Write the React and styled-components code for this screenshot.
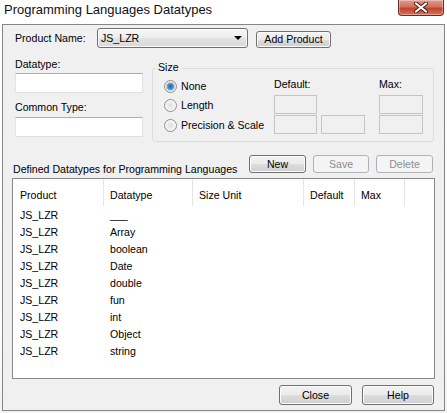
import styled, { createGlobalStyle } from "styled-components";

const GlobalStyle = createGlobalStyle`
  html, body {
    margin: 0;
    padding: 0;
    width: 447px;
    height: 413px;
    overflow: hidden;
  }
  body {
    font-family: "Liberation Sans", Arial, sans-serif;
    font-size: 10.6px;
    color: #000;
  }
`;

const rows = [
  ["JS_LZR", "___"],
  ["JS_LZR", "Array"],
  ["JS_LZR", "boolean"],
  ["JS_LZR", "Date"],
  ["JS_LZR", "double"],
  ["JS_LZR", "fun"],
  ["JS_LZR", "int"],
  ["JS_LZR", "Object"],
  ["JS_LZR", "string"],
];

const columns = ["Product", "Datatype", "Size Unit", "Default", "Max", ""];

export default function App() {
  return (
    <Window>
      <GlobalStyle />
      <TitleBar>
        <Title>Programming Languages Datatypes</Title>
        <CloseX>
          <svg width="14" height="11" viewBox="0 0 14 11">
            <path
              d="M2 1.5 L12 9.5 M12 1.5 L2 9.5"
              stroke="#4a1a14"
              strokeWidth="4"
              strokeLinecap="round"
            />
            <path
              d="M2 1.5 L12 9.5 M12 1.5 L2 9.5"
              stroke="#fff"
              strokeWidth="2.2"
              strokeLinecap="round"
            />
          </svg>
        </CloseX>
      </TitleBar>

      <Client>
        <ProductRow>
          <ProductLabel>Product Name:</ProductLabel>
          <Combo>
            <span>JS_LZR</span>
            <Arrow />
          </Combo>
          <Button $w={75} $h={17} $ml={8}>Add Product</Button>
        </ProductRow>

        <FieldsRow>
          <LeftCol>
            <FieldLabel>Datatype:</FieldLabel>
            <TextBox $mt={2} />
            <FieldLabel $mt={8}>Common Type:</FieldLabel>
            <TextBox $mt={3} />
          </LeftCol>

          <Group>
            <Legend>Size</Legend>
            <SizeGrid>
              <Radio style={{ gridArea: "none" }} $checked>None</Radio>
              <Radio style={{ gridArea: "len" }}>Length</Radio>
              <Radio style={{ gridArea: "prec" }}>Precision &amp; Scale</Radio>
              <SmallLabel style={{ gridArea: "dlab" }}>Default:</SmallLabel>
              <SmallLabel style={{ gridArea: "mlab" }}>Max:</SmallLabel>
              <DisabledBox style={{ gridArea: "d1" }} />
              <DisabledBox style={{ gridArea: "m1" }} />
              <DisabledBox style={{ gridArea: "d2" }} />
              <DisabledBox style={{ gridArea: "d3" }} />
              <DisabledBox style={{ gridArea: "m2" }} />
            </SizeGrid>
          </Group>
        </FieldsRow>

        <DefinedRow>
          <DefinedLabel>Defined Datatypes for Programming Languages</DefinedLabel>
          <ButtonGroup>
            <Button $w={57} $h={18}>New</Button>
            <Button $w={56} $h={18} disabled>Save</Button>
            <Button $w={57} $h={18} disabled>Delete</Button>
          </ButtonGroup>
        </DefinedRow>

        <List>
          <Header>
            {columns.map((c, i) => (
              <HeadCell key={i}>{c}</HeadCell>
            ))}
          </Header>
          <Body>
            {rows.map(([p, d], i) => (
              <Row key={i}>
                <Cell>{p}</Cell>
                <Cell>{d}</Cell>
              </Row>
            ))}
          </Body>
        </List>

        <Footer>
          <Button $w={73} $h={20}>Close</Button>
          <Button $w={72} $h={20}>Help</Button>
        </Footer>
      </Client>
    </Window>
  );
}

const Window = styled.div`
  width: 447px;
  height: 413px;
  display: flex;
  flex-direction: column;
  background: linear-gradient(#ffffff, #fbfbfb 85%, #f2f2f2);
`;

const TitleBar = styled.div`
  height: 24px;
  display: flex;
  justify-content: space-between;
  align-items: flex-start;
`;

const Title = styled.div`
  font-family: "Liberation Sans", Arial, sans-serif;
  font-size: 13px;
  line-height: 20px;
  padding: 0 0 0 4px;
  color: #111;
`;

const CloseX = styled.div`
  width: 46px;
  height: 16px;
  margin-right: 3px;
  box-sizing: border-box;
  border: 1px solid #6e2a22;
  border-top: none;
  border-radius: 0 0 4px 4px;
  background: linear-gradient(#e29a8c 0%, #d46f5e 45%, #c0432e 55%, #d2725f 100%);
  box-shadow: inset 0 0 0 1px rgba(255, 255, 255, 0.35);
  display: flex;
  align-items: center;
  justify-content: center;
`;

const Client = styled.div`
  margin-left: 2px;
  width: 443px;
  height: 387px;
  box-sizing: border-box;
  border: 1px solid #858585;
  background: #f0f0f0;
  padding: 3px 9px 0 9px;
  display: flex;
  flex-direction: column;
`;

const ProductRow = styled.div`
  display: flex;
  align-items: center;
  height: 20px;
  padding-left: 3px;
`;

const ProductLabel = styled.div`
  width: 82px;
  line-height: 12px;
`;

const Combo = styled.div`
  width: 151px;
  height: 20px;
  box-sizing: border-box;
  border: 1px solid #707070;
  border-radius: 3px;
  background: linear-gradient(#f7f7f7 0%, #ededed 50%, #e2e2e2 51%, #d9d9d9 100%);
  box-shadow: inset 0 0 0 1px #fbfbfb;
  display: flex;
  align-items: center;
  justify-content: space-between;
  padding: 0 4px 0 3px;
  line-height: 13px;
`;

const Arrow = styled.span`
  width: 0;
  height: 0;
  border-left: 4px solid transparent;
  border-right: 4px solid transparent;
  border-top: 4px solid #000;
  margin-right: 1px;
`;

const Button = styled.button`
  width: ${(p) => p.$w}px;
  height: ${(p) => p.$h}px;
  margin-left: ${(p) => p.$ml || 0}px;
  box-sizing: border-box;
  padding: 0;
  font-family: "Liberation Sans", Arial, sans-serif;
  font-size: 10.6px;
  line-height: 13px;
  color: #000;
  border: 1px solid #707070;
  border-radius: 3px;
  background: linear-gradient(#f2f2f2 0%, #ebebeb 50%, #dddddd 51%, #cfcfcf 100%);
  box-shadow: inset 0 0 0 1px #fcfcfc;
  align-self: ${(p) => (p.$ml ? "flex-end" : "auto")};

  &:disabled {
    color: #8d8d8d;
    border-color: #adb2b5;
    background: #f4f4f4;
    box-shadow: none;
  }
`;

const FieldsRow = styled.div`
  display: flex;
  align-items: flex-start;
  margin-top: 10px;
  padding-left: 3px;
`;

const LeftCol = styled.div`
  width: 128px;
  display: flex;
  flex-direction: column;
`;

const FieldLabel = styled.div`
  line-height: 13px;
  margin-top: ${(p) => p.$mt || 0}px;
`;

const TextBox = styled.div`
  height: 20px;
  margin-top: ${(p) => p.$mt || 0}px;
  box-sizing: border-box;
  background: #fff;
  border: 1px solid #dbdfe6;
  border-top-color: #abadb3;
  border-left-color: #e2e3ea;
  border-right-color: #e2e3ea;
`;

const Group = styled.div`
  width: 282px;
  margin: 10px 0 0 9px;
  box-sizing: border-box;
  border: 1px solid #d5dfe5;
  border-radius: 3px;
  padding: 0 0 7px 11px;
`;

const Legend = styled.div`
  width: fit-content;
  margin: -8px 0 0 -8px;
  padding: 0 2px;
  line-height: 13px;
  background: #f0f0f0;
`;

const SizeGrid = styled.div`
  margin-top: 4px;
  display: grid;
  grid-template-columns: 110px 43px 4px 44px 14px 44px;
  grid-template-rows: 16px 19px 19px;
  row-gap: 1px;
  align-items: center;
  grid-template-areas:
    "none dlab . . . mlab"
    "len d1 . . . m1"
    "prec d2 . d3 . m2";
`;

const SmallLabel = styled.div`
  line-height: 13px;
  align-self: start;
`;

const DisabledBox = styled.div`
  height: 19px;
  box-sizing: border-box;
  border: 1px solid #c4c4c4;
  background: #f0f0f0;
`;

const Radio = styled.div`
  display: flex;
  align-items: center;
  gap: 4px;
  line-height: 13px;
  margin-top: 1px;

  &::before {
    content: "";
    width: 11px;
    height: 11px;
    flex: none;
    border-radius: 50%;
    border: 1px solid #8e8f8f;
    background: ${(p) =>
      p.$checked
        ? "radial-gradient(circle, #1f6fa9 0, #3a8fcf 2.5px, #5fb1e6 3.5px, #d5d5d5 4px, #ffffff 6px)"
        : "radial-gradient(circle, #dcdcdc 0, #ececec 3px, #f7f7f7 5px, #ffffff 6px)"};
  }
`;

const DefinedRow = styled.div`
  display: flex;
  align-items: flex-start;
  height: 18px;
  margin-top: 13px;
`;

const DefinedLabel = styled.div`
  margin: 8px 0 0 1px;
  line-height: 13px;
`;

const ButtonGroup = styled.div`
  display: flex;
  gap: 7px;
  margin: 0 2px 0 auto;
`;

const List = styled.div`
  margin-top: 5px;
  height: 201px;
  box-sizing: border-box;
  border: 1px solid #828790;
  background: #fff;
`;

const cols = "91px 89px 111px 51px 50px 1fr";

const Header = styled.div`
  display: grid;
  grid-template-columns: ${cols};
  height: 27px;
`;

const HeadCell = styled.div`
  border-right: 1px solid #e5e5e5;
  padding: 10px 0 0 6px;
  line-height: 13px;

  &:first-child {
    padding-left: 7px;
  }
  &:last-child {
    border-right: none;
  }
`;

const Body = styled.div`
  padding-top: 1px;
`;

const Row = styled.div`
  display: grid;
  grid-template-columns: ${cols};
  height: 17px;
  align-items: center;
`;

const Cell = styled.div`
  padding-left: 6px;
  line-height: 13px;

  &:first-child {
    padding-left: 7px;
  }
`;

const Footer = styled.div`
  display: flex;
  justify-content: flex-end;
  gap: 10px;
  margin: 6px 1px 0 0;
`;
